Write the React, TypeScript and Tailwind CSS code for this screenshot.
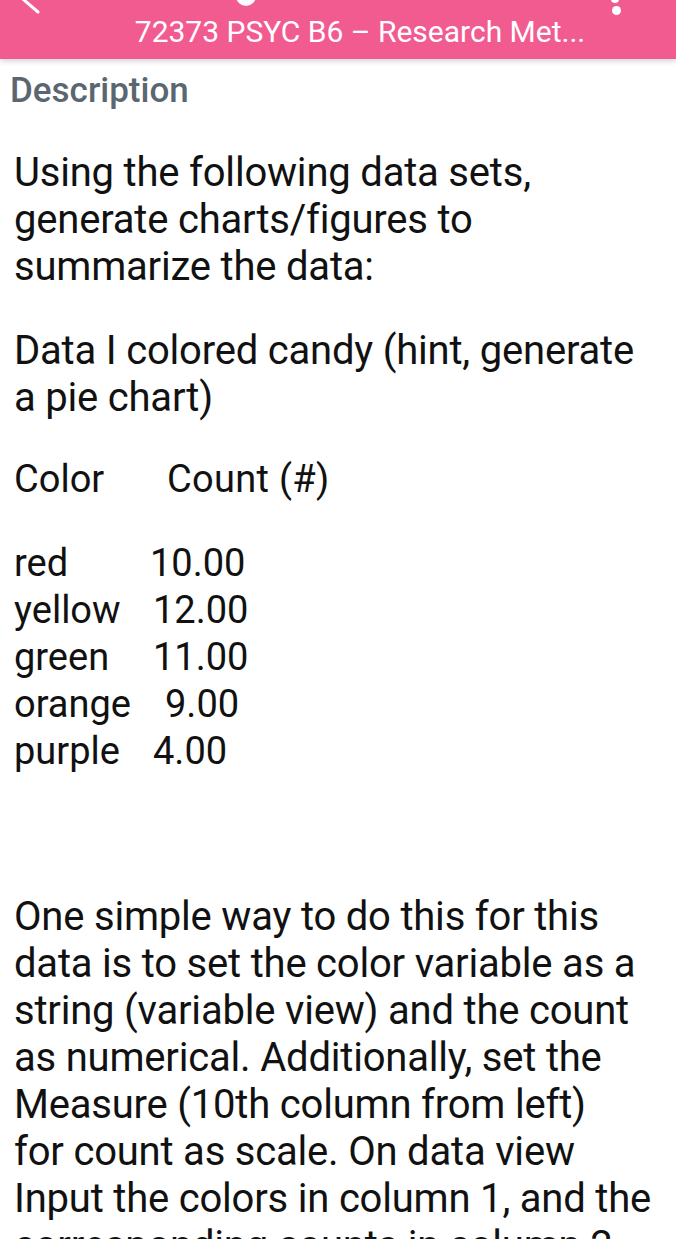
import React from 'react';

const rows = [
  { label: 'red', value: '10.00', w: 'w-[136px]' },
  { label: 'yellow', value: '12.00', w: 'w-[139px]' },
  { label: 'green', value: '11.00', w: 'w-[139px]' },
  { label: 'orange', value: '9.00', w: 'w-[151px]' },
  { label: 'purple', value: '4.00', w: 'w-[139px]' },
];

function Para({ lines, className = '' }: { lines: string[]; className?: string }) {
  return (
    <p className={`text-[40px] leading-[47px] tracking-[-0.2px] text-[#111] ${className}`}>
      {lines.map((l, i) => (
        <span key={i} className="block whitespace-nowrap">
          {l}
        </span>
      ))}
    </p>
  );
}

export default function App() {
  return (
    <div className="w-[676px] h-[1239px] overflow-hidden bg-white" style={{ fontFamily: 'Roboto, "Noto Sans", sans-serif' }}>
      {/* top bar */}
      <div className="relative h-[59px] bg-[#f25b90] shadow-[0_2px_6px_rgba(0,0,0,0.18)] flex items-end justify-center pl-[44px] pb-[12px]">
        <svg className="absolute left-[16px] top-[-14px]" width="26" height="30" viewBox="0 0 26 30">
          <path d="M22 2 L8 14 L22 26" stroke="white" strokeWidth="3" fill="none" strokeLinecap="round" />
        </svg>
        <div className="absolute left-[236px] top-[-14px] w-[20px] h-[20px] rounded-full bg-white" />
        <div className="absolute left-[611px] top-[-5px] w-[8px] h-[8px] rounded-full bg-white" />
        <div className="absolute left-[612px] top-[6px] w-[9px] h-[9px] rounded-full bg-white" />
        <span className="text-white text-[30px] leading-[30px] whitespace-nowrap">
          72373 PSYC B6 – Research Met...
        </span>
      </div>

      <div className="px-[14px]">
        <h2 className="-ml-[4px] mt-[13px] text-[35px] leading-[38px] font-medium text-[#5a6670]">Description</h2>

        <Para
          className="mt-[39px]"
          lines={['Using the following data sets,', 'generate charts/figures to', 'summarize the data:']}
        />

        <Para className="mt-[37px]" lines={['Data I colored candy (hint, generate', 'a pie chart)']} />

        <div className="mt-[35px] text-[38px] leading-[47px] text-[#111]">
          <div className="flex">
            <span className="inline-block w-[153px]">Color</span>
            <span className="tracking-[0.3px]">Count (#)</span>
          </div>
          <div className="mt-[37px]">
            {rows.map((r) => (
              <div key={r.label} className="flex">
                <span className={`inline-block ${r.w}`}>{r.label}</span>
                <span>{r.value}</span>
              </div>
            ))}
          </div>
        </div>

        <Para
          className="mt-[118px]"
          lines={[
            'One simple way to do this for this',
            'data is to set the color variable as a',
            'string (variable view) and the count',
            'as numerical. Additionally, set the',
            'Measure (10th column from left)',
            'for count as scale. On data view',
            'Input the colors in column 1, and the',
            'corresponding counts in column 2',
          ]}
        />
      </div>
    </div>
  );
}
